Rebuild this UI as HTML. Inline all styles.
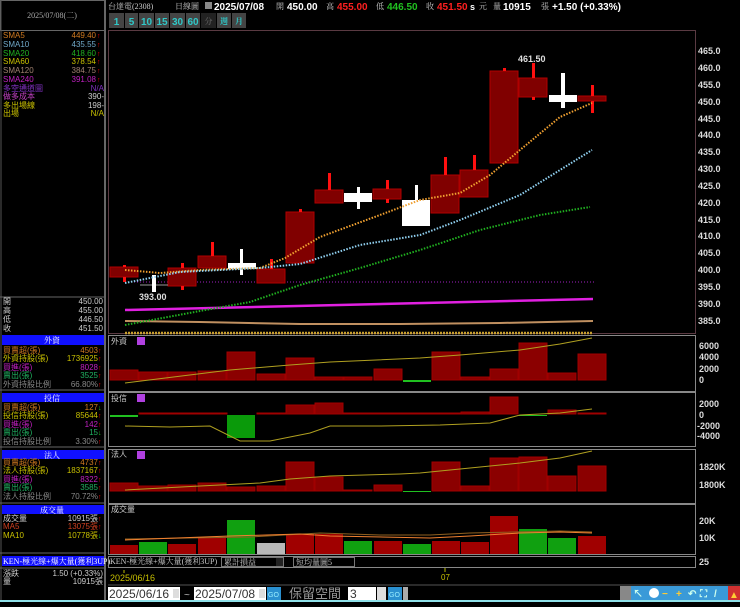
<!DOCTYPE html><html><head><meta charset="utf-8"><style>
body{margin:0;background:#000;width:740px;height:602px;overflow:hidden}
svg text{font-family:"Liberation Sans","Noto Sans CJK TC",sans-serif}
.s{font-family:"Liberation Serif","Noto Serif CJK SC",serif;font-size:8px}
</style></head><body>
<svg width="740" height="602" viewBox="0 0 740 602" xmlns="http://www.w3.org/2000/svg">
<rect width="740" height="602" fill="#000"/>
<!-- left panel borders -->
<rect x="0.5" y="0.5" width="104" height="30" fill="none" stroke="#666"/>
<line x1="105" y1="0" x2="105" y2="600" stroke="#666" stroke-width="2"/>
<line x1="1" y1="0" x2="1" y2="600" stroke="#555"/>
<text x="52" y="18" fill="#aaa" class="s" text-anchor="middle">2025/07/08(二)</text>
<g class="s">
<text x="3" y="38" fill="#d07a20">SMA5</text><text x="96" y="38" fill="#d07a20" text-anchor="end">449.40</text>
<text x="3" y="47" fill="#70a8c8">SMA10</text><text x="96" y="47" fill="#70a8c8" text-anchor="end">435.55</text>
<text x="3" y="56" fill="#20b020">SMA20</text><text x="96" y="56" fill="#20b020" text-anchor="end">418.60</text>
<text x="3" y="64" fill="#c8c000">SMA60</text><text x="96" y="64" fill="#c8c000" text-anchor="end">378.54</text>
<text x="3" y="73" fill="#a08070">SMA120</text><text x="96" y="73" fill="#a08070" text-anchor="end">384.75</text>
<text x="3" y="82" fill="#c020c0">SMA240</text><text x="96" y="82" fill="#c020c0" text-anchor="end">391.08</text>
<text x="3" y="91" fill="#8030c0">多空通道圖</text><text x="104" y="91" fill="#8030c0" text-anchor="end">N/A</text>
<text x="3" y="99" fill="#c040c0">做多成本</text><text x="104" y="99" fill="#ccc" text-anchor="end">390-</text>
<text x="3" y="108" fill="#c8c000">多出場線</text><text x="104" y="108" fill="#ccc" text-anchor="end">198-</text>
<text x="3" y="116" fill="#c8c000">出場</text><text x="104" y="116" fill="#c8c000" text-anchor="end">N/A</text>
</g>
<g fill="#e00000" font-size="7"><text x="97" y="38">↑</text><text x="97" y="47">↑</text><text x="97" y="56">↑</text><text x="97" y="64">↑</text><text x="97" y="73">↑</text><text x="97" y="82">↑</text></g>
<line x1="0" y1="297" x2="105" y2="297" stroke="#666"/>
<g class="s" fill="#ccc">
<text x="3" y="304">開</text><text x="103" y="304" text-anchor="end">450.00</text>
<text x="3" y="313">高</text><text x="103" y="313" text-anchor="end">455.00</text>
<text x="3" y="322">低</text><text x="103" y="322" text-anchor="end">446.50</text>
<text x="3" y="331">收</text><text x="103" y="331" text-anchor="end">451.50</text>
</g>
<!-- 外資 -->
<rect x="2" y="335" width="102" height="10" fill="#1010ff"/><text x="52" y="343" class="s" fill="#fff" text-anchor="middle">外資</text>
<g class="s">
<text x="3" y="353" fill="#d07a20">買賣超(張)</text><text x="98" y="353" fill="#d07a20" text-anchor="end">4503</text>
<text x="3" y="361" fill="#c8c000">外資持股(張)</text><text x="98" y="361" fill="#c8c000" text-anchor="end">1736925</text>
<text x="3" y="370" fill="#c020c0">買進(張)</text><text x="98" y="370" fill="#c020c0" text-anchor="end">8028</text>
<text x="3" y="378" fill="#20b060">賣出(張)</text><text x="98" y="378" fill="#20b060" text-anchor="end">3525</text>
<text x="3" y="387" fill="#888">外資持股比例</text><text x="98" y="387" fill="#888" text-anchor="end">66.80%</text>
</g>
<line x1="0" y1="390" x2="105" y2="390" stroke="#666"/>
<rect x="2" y="393" width="102" height="9" fill="#1010ff"/><text x="52" y="401" class="s" fill="#fff" text-anchor="middle">投信</text>
<g class="s">
<text x="3" y="410" fill="#d07a20">買賣超(張)</text><text x="98" y="410" fill="#d07a20" text-anchor="end">127</text>
<text x="3" y="418" fill="#c8c000">投信持股(張)</text><text x="98" y="418" fill="#c8c000" text-anchor="end">85644</text>
<text x="3" y="427" fill="#c020c0">買進(張)</text><text x="98" y="427" fill="#c020c0" text-anchor="end">142</text>
<text x="3" y="435" fill="#20b060">賣出(張)</text><text x="98" y="435" fill="#20b060" text-anchor="end">15</text>
<text x="3" y="444" fill="#888">投信持股比例</text><text x="98" y="444" fill="#888" text-anchor="end">3.30%</text>
</g>
<line x1="0" y1="447" x2="105" y2="447" stroke="#666"/>
<rect x="2" y="450" width="102" height="9" fill="#1010ff"/><text x="52" y="458" class="s" fill="#fff" text-anchor="middle">法人</text>
<g class="s">
<text x="3" y="465" fill="#d07a20">買賣超(張)</text><text x="98" y="465" fill="#d07a20" text-anchor="end">4737</text>
<text x="3" y="473" fill="#c8c000">法人持股(張)</text><text x="98" y="473" fill="#c8c000" text-anchor="end">1837167</text>
<text x="3" y="482" fill="#c020c0">買進(張)</text><text x="98" y="482" fill="#c020c0" text-anchor="end">8322</text>
<text x="3" y="490" fill="#20b060">賣出(張)</text><text x="98" y="490" fill="#20b060" text-anchor="end">3585</text>
<text x="3" y="499" fill="#888">法人持股比例</text><text x="98" y="499" fill="#888" text-anchor="end">70.72%</text>
</g>
<line x1="0" y1="503" x2="105" y2="503" stroke="#666"/>
<rect x="2" y="505" width="102" height="9" fill="#1010ff"/><text x="52" y="513" class="s" fill="#fff" text-anchor="middle">成交量</text>
<g class="s">
<text x="3" y="521" fill="#ccc">成交量</text><text x="98" y="521" fill="#ccc" text-anchor="end">10915張</text>
<text x="3" y="529" fill="#d04020">MA5</text><text x="98" y="529" fill="#d04020" text-anchor="end">13075張</text>
<text x="3" y="538" fill="#c8c000">MA10</text><text x="98" y="538" fill="#c8c000" text-anchor="end">10778張</text>
</g>
<g fill="#e00000" font-size="7"><text x="98" y="353">↑</text><text x="98" y="361">↑</text><text x="98" y="370">↑</text><text x="98" y="378">↑</text><text x="98" y="387">↑</text><text x="98" y="427">↑</text><text x="98" y="418">↑</text><text x="98" y="444">↑</text><text x="98" y="465">↑</text><text x="98" y="473">↑</text><text x="98" y="482">↑</text><text x="98" y="490">↑</text><text x="98" y="499">↑</text><text x="98" y="521">↑</text><text x="98" y="529">↑</text></g>
<g fill="#20c020" font-size="7"><text x="98" y="410">↓</text><text x="98" y="435">↓</text><text x="98" y="538">↓</text></g>
<line x1="0" y1="553" x2="105" y2="553" stroke="#666"/>
<rect x="2" y="556" width="102" height="10" fill="#1010ff"/><text x="3" y="564" class="s" fill="#fff">KEN-極光線+爆大量(獲利3UP)</text>
<line x1="0" y1="568" x2="105" y2="568" stroke="#666"/>
<g class="s" fill="#ccc"><text x="3" y="576">漲跌</text><text x="103" y="576" text-anchor="end">1.50 (+0.33%)</text><text x="3" y="584">量</text><text x="103" y="584" text-anchor="end">10915張</text></g>

<!-- top bar -->
<text x="108" y="9" class="s" fill="#ccc">台達電(2308)</text>
<text x="175" y="9" class="s" fill="#ccc">日線圖</text>
<rect x="205" y="2" width="7" height="7" fill="#888"/>
<text x="214" y="10" font-size="10" font-weight="bold" fill="#fff">2025/07/08</text>
<text x="276" y="9" class="s" fill="#ccc">開</text><text x="287" y="10" font-size="10" font-weight="bold" fill="#fff">450.00</text>
<text x="326" y="9" class="s" fill="#ccc">高</text><text x="337" y="10" font-size="10" font-weight="bold" fill="#ff2020">455.00</text>
<text x="376" y="9" class="s" fill="#ccc">低</text><text x="387" y="10" font-size="10" font-weight="bold" fill="#20c020">446.50</text>
<text x="426" y="9" class="s" fill="#ccc">收</text><text x="437" y="10" font-size="10" font-weight="bold" fill="#ff2020">451.50</text>
<text x="470" y="10" font-size="9" font-weight="bold" fill="#fff">s</text><text x="479" y="9" class="s" fill="#ccc">元</text>
<text x="493" y="9" class="s" fill="#ccc">量</text><text x="503" y="10" font-size="10" font-weight="bold" fill="#fff">10915</text>
<text x="541" y="9" class="s" fill="#ccc">張</text><text x="552" y="10" font-size="10" font-weight="bold" fill="#fff">+1.50 (+0.33%)</text>
<g font-size="10" font-weight="bold" fill="#30c8c8" text-anchor="middle">
<rect x="109" y="13" width="15" height="15" fill="#444"/><text x="116.5" y="25">1</text>
<rect x="125" y="13" width="13" height="15" fill="#444"/><text x="131.5" y="25">5</text>
<rect x="139" y="13" width="15" height="15" fill="#444"/><text x="146.5" y="25">10</text>
<rect x="155" y="13" width="14" height="15" fill="#444"/><text x="162" y="25">15</text>
<rect x="170" y="13" width="15" height="15" fill="#444"/><text x="177.5" y="25">30</text>
<rect x="186" y="13" width="14" height="15" fill="#444"/><text x="193" y="25">60</text>
<rect x="201" y="13" width="15" height="15" fill="#222"/><text x="208.5" y="24" class="s" fill="#555">分</text>
<rect x="217" y="13" width="14" height="15" fill="#444"/><text x="224" y="24" class="s">週</text>
<rect x="232" y="13" width="14" height="15" fill="#444"/><text x="239" y="24" class="s">月</text>
</g>

<!-- main chart frame -->
<rect x="108.5" y="30.5" width="587" height="303" fill="none" stroke="#5a3a42"/>
<g font-size="9" font-weight="bold" fill="#ddd">
<text x="698" y="54">465.0</text><text x="698" y="71">460.0</text><text x="698" y="88">455.0</text><text x="698" y="105">450.0</text><text x="698" y="122">445.0</text><text x="698" y="138">440.0</text><text x="698" y="155">435.0</text><text x="698" y="172">430.0</text><text x="698" y="189">425.0</text><text x="698" y="206">420.0</text><text x="698" y="223">415.0</text><text x="698" y="239">410.0</text><text x="698" y="256">405.0</text><text x="698" y="273">400.0</text><text x="698" y="290">395.0</text><text x="698" y="307">390.0</text><text x="698" y="324">385.0</text>
</g>
<line x1="125" y1="282" x2="595" y2="282" stroke="#a020c0" stroke-dasharray="1,2"/>
<line x1="125" y1="310" x2="593" y2="299" stroke="#e020e0" stroke-width="2.5"/>
<polyline points="125,321 200,322 300,324 400,324 500,323 593,321" fill="none" stroke="#c09060" stroke-width="2"/>
<line x1="125" y1="333" x2="593" y2="333" stroke="#c8a030" stroke-width="2.5" stroke-dasharray="2,1"/>
<!-- candles -->
<g fill="#800000" stroke="#b00000" stroke-width="1">
<rect x="110" y="267" width="28" height="10"/>
<rect x="168" y="268" width="28" height="18"/>
<rect x="198" y="256" width="28" height="12"/>
<rect x="257" y="269" width="28" height="14"/>
<rect x="286" y="212" width="28" height="51"/>
<rect x="315" y="190" width="28" height="13"/>
<rect x="373" y="189" width="28" height="10"/>
<rect x="431" y="175" width="28" height="38"/>
<rect x="460" y="170" width="28" height="27"/>
<rect x="490" y="71" width="28" height="92"/>
<rect x="519" y="78" width="28" height="19"/>
<rect x="578" y="96" width="28" height="5"/>
</g>
<g fill="#ff1010">
<rect x="123" y="277" width="3" height="5"/><rect x="123" y="265" width="3" height="2"/>
<rect x="181" y="263" width="3" height="5"/><rect x="181" y="286" width="3" height="4"/>
<rect x="211" y="242" width="3" height="14"/>
<rect x="270" y="259" width="3" height="10"/>
<rect x="299" y="209" width="3" height="3"/>
<rect x="328" y="173" width="3" height="17"/>
<rect x="386" y="180" width="3" height="9"/><rect x="386" y="199" width="3" height="4"/>
<rect x="444" y="157" width="3" height="18"/>
<rect x="473" y="155" width="3" height="15"/>
<rect x="503" y="68" width="3" height="3"/>
<rect x="532" y="63" width="3" height="15"/><rect x="532" y="97" width="3" height="3"/>
<rect x="591" y="85" width="3" height="11"/><rect x="591" y="101" width="3" height="12"/>
</g>
<g fill="#fff">
<line x1="140" y1="285" x2="168" y2="285" stroke="#999"/>
<rect x="152" y="275" width="4" height="17"/>
<rect x="228" y="263" width="28" height="6"/><rect x="240" y="249" width="3" height="26"/>
<rect x="344" y="193" width="28" height="9"/><rect x="357" y="187" width="3" height="22"/>
<rect x="402" y="200" width="28" height="26"/><rect x="415" y="185" width="3" height="15"/>
<rect x="549" y="95" width="28" height="7"/><rect x="561" y="73" width="4" height="35"/>
</g>
<text x="139" y="300" font-size="9" font-weight="bold" fill="#ddd">393.00</text>
<text x="518" y="62" font-size="9" font-weight="bold" fill="#ddd">461.50</text>
<polyline points="125,270 160,273 200,270 260,268 285,258 320,237 380,215 420,200 460,193 490,175 520,150 560,117 592,103" fill="none" stroke="#f0a030" stroke-width="2" stroke-dasharray="1.5,1.5"/>
<polyline points="125,283 180,272 260,268 300,264 360,245 420,235 460,220 520,195 560,170 592,150" fill="none" stroke="#90d0f0" stroke-width="2" stroke-dasharray="1.5,1.5"/>
<polyline points="125,325 200,311 250,302 300,285 360,268 420,250 480,230 540,215 590,207" fill="none" stroke="#20b020" stroke-width="2" stroke-dasharray="1.5,1.5"/>

<!-- sub panels -->
<g fill="none" stroke="#888"><rect x="108.5" y="335.5" width="587" height="56"/><rect x="108.5" y="392.5" width="587" height="54"/><rect x="108.5" y="449.5" width="587" height="54"/><rect x="108.5" y="504.5" width="587" height="50"/><rect x="108.5" y="556.5" width="587" height="11"/></g>
<g class="s" fill="#ccc"><text x="111" y="344">外資</text><text x="111" y="401">投信</text><text x="111" y="457">法人</text><text x="111" y="512">成交量</text></g>
<g fill="#b040e0"><rect x="137" y="337" width="8" height="8"/><rect x="137" y="394" width="8" height="8"/><rect x="137" y="451" width="8" height="8"/></g>
<g font-size="9" font-weight="bold" fill="#ddd">
<text x="699" y="349">6000</text><text x="699" y="360">4000</text><text x="699" y="372">2000</text><text x="699" y="383">0</text>
<text x="699" y="407">2000</text><text x="699" y="418">0</text><text x="697" y="429">-2000</text><text x="697" y="439">-4000</text>
<text x="699" y="470">1820K</text><text x="699" y="488">1800K</text>
<text x="699" y="524">20K</text><text x="699" y="541">10K</text><text x="699" y="565">25</text>
</g>
<!-- panel1 bars -->
<g fill="#8b0000" stroke="#a00000">
<rect x="110" y="370" width="28" height="10"/><rect x="139" y="372" width="28" height="8"/><rect x="168" y="372" width="28" height="8"/><rect x="198" y="371" width="28" height="9"/><rect x="227" y="352" width="28" height="28"/><rect x="257" y="374" width="28" height="6"/><rect x="286" y="358" width="28" height="22"/><rect x="315" y="377" width="28" height="3"/><rect x="344" y="377" width="28" height="3"/><rect x="374" y="369" width="28" height="11"/><rect x="432" y="352" width="28" height="28"/><rect x="461" y="377" width="28" height="3"/><rect x="490" y="369" width="28" height="11"/><rect x="519" y="343" width="28" height="37"/><rect x="548" y="373" width="28" height="7"/><rect x="578" y="354" width="28" height="26"/>
</g>
<rect x="403" y="380" width="28" height="2" fill="#20c020"/>
<polyline points="125,383 230,370 290,365 330,362 420,358 460,355 520,350 560,344 592,338" fill="none" stroke="#b0a020"/>
<!-- panel2 -->
<g fill="#8b0000" stroke="#a00000">
<rect x="139" y="413" width="88" height="1"/><rect x="257" y="413" width="28" height="1"/><rect x="286" y="405" width="28" height="9"/><rect x="315" y="403" width="28" height="11"/><rect x="344" y="413" width="116" height="1"/><rect x="461" y="412" width="28" height="2"/><rect x="490" y="397" width="28" height="17"/><rect x="548" y="410" width="28" height="4"/><rect x="578" y="413" width="28" height="1"/>
</g>
<rect x="110" y="415" width="28" height="2" fill="#20c020"/>
<rect x="227" y="415" width="28" height="23" fill="#0a9a0a"/>
<rect x="519" y="415" width="28" height="1" fill="#20c020"/>
<polyline points="125,426 170,427 210,426 240,441 270,441 310,433 330,426 380,426 440,425 490,423 520,415 560,413 592,409" fill="none" stroke="#b0a020"/>
<!-- panel3 -->
<g fill="#8b0000" stroke="#a00000">
<rect x="110" y="483" width="28" height="8"/><rect x="139" y="486" width="28" height="5"/><rect x="168" y="485" width="28" height="6"/><rect x="198" y="483" width="28" height="8"/><rect x="227" y="487" width="28" height="4"/><rect x="257" y="486" width="28" height="5"/><rect x="286" y="462" width="28" height="29"/><rect x="315" y="477" width="28" height="14"/><rect x="344" y="490" width="28" height="1"/><rect x="374" y="485" width="28" height="6"/><rect x="432" y="462" width="28" height="29"/><rect x="461" y="486" width="28" height="5"/><rect x="490" y="458" width="28" height="33"/><rect x="519" y="457" width="28" height="34"/><rect x="548" y="476" width="28" height="15"/><rect x="578" y="466" width="28" height="25"/>
</g>
<rect x="403" y="491" width="28" height="1" fill="#20c020"/>
<polyline points="125,490 200,486 260,483 290,479 330,476 400,474 420,473 460,469 520,463 560,458 592,451" fill="none" stroke="#b0a020"/>
<!-- panel4 volume -->
<g stroke-width="1">
<rect x="110" y="545" width="28" height="9" fill="#a00000"/><rect x="139" y="542" width="28" height="12" fill="#10a010"/><rect x="168" y="544" width="28" height="10" fill="#a00000"/><rect x="198" y="538" width="28" height="16" fill="#a00000"/><rect x="227" y="520" width="28" height="34" fill="#10a010"/><rect x="257" y="543" width="28" height="11" fill="#b8b8b8"/><rect x="286" y="534" width="28" height="20" fill="#a00000"/><rect x="315" y="534" width="28" height="20" fill="#a00000"/><rect x="344" y="541" width="28" height="13" fill="#10a010"/><rect x="374" y="541" width="28" height="13" fill="#a00000"/><rect x="403" y="544" width="28" height="10" fill="#10a010"/><rect x="432" y="541" width="28" height="13" fill="#a00000"/><rect x="461" y="542" width="28" height="12" fill="#a00000"/><rect x="490" y="516" width="28" height="38" fill="#a00000"/><rect x="519" y="529" width="28" height="25" fill="#10a010"/><rect x="548" y="538" width="28" height="16" fill="#10a010"/><rect x="578" y="536" width="28" height="18" fill="#a00000"/>
</g>
<polyline points="125,539 250,537 320,533 380,535 430,535 470,533 560,531 592,532" fill="none" stroke="#906020"/>
<polyline points="125,540 230,536 300,534 330,536 430,538 470,536 520,533 560,532 592,533" fill="none" stroke="#f08030"/>
<!-- KEN row -->
<text x="110" y="564" class="s" fill="#ccc">KEN-極光線+爆大量(獲利3UP)</text>
<rect x="221.5" y="557.5" width="62" height="9" fill="none" stroke="#777"/><text x="224" y="565" class="s" fill="#ccc">累計損益</text><rect x="276" y="558" width="7" height="8" fill="#222"/>
<rect x="293.5" y="557.5" width="61" height="9" fill="none" stroke="#777"/><text x="296" y="565" class="s" fill="#ccc">短均量圖5</text>
<line x1="124" y1="570" x2="124" y2="573" stroke="#bb0"/>
<text x="110" y="581" font-size="9" fill="#c8c000">2025/06/16</text>
<line x1="445" y1="568" x2="445" y2="572" stroke="#bb0"/>
<text x="441" y="580" font-size="8" fill="#c8c000">07</text>
<line x1="108" y1="585" x2="740" y2="585" stroke="#555"/>
<!-- bottom controls -->
<rect x="108" y="587" width="72" height="13" fill="#fff"/><text x="109" y="598" font-size="12" font-family="Liberation Serif" fill="#333">2025/06/16</text><rect x="173" y="589" width="6" height="9" fill="#ddd"/>
<text x="184" y="598" font-size="10" fill="#bbb">~</text>
<rect x="194" y="587" width="72" height="13" fill="#fff"/><text x="195" y="598" font-size="12" font-family="Liberation Serif" fill="#333">2025/07/08</text><rect x="259" y="589" width="6" height="9" fill="#ddd"/>
<rect x="267" y="587" width="14" height="13" fill="#2a90d0"/><text x="268" y="597" font-size="7" fill="#9ef">GO</text>
<text x="289" y="598" font-size="13" fill="#999" font-family="Noto Sans CJK TC,sans-serif">保留空間</text>
<rect x="348" y="587" width="28" height="13" fill="#fff"/><text x="350" y="598" font-size="12" font-family="Liberation Serif" fill="#333">3</text><rect x="377" y="587" width="9" height="13" fill="#ddd"/>
<rect x="388" y="587" width="14" height="13" fill="#2a90d0"/><text x="389" y="597" font-size="7" fill="#9ef">GO</text>
<rect x="403" y="587" width="5" height="13" fill="#aaa"/>
<rect x="620" y="586" width="11" height="14" fill="#888"/>
<rect x="631" y="586" width="97" height="14" fill="#3a9ad8"/>
<g font-size="10" font-weight="bold"><text x="633" y="597" fill="#cfe">↖</text><circle cx="654" cy="593" r="5" fill="#fff"/><text x="662" y="597" fill="#fc3">−</text><text x="676" y="597" fill="#fc3">+</text><text x="688" y="597" fill="#cfe">↶</text><text x="700" y="597" fill="#cfe">⛶</text><text x="714" y="597" fill="#cfe">/</text></g>
<rect x="728" y="586" width="12" height="14" fill="#d03030"/><text x="729" y="598" font-size="10" fill="#fc3">▲</text>
<rect x="0" y="600" width="740" height="2" fill="#8ee0e8"/>
</svg>
</body></html>
